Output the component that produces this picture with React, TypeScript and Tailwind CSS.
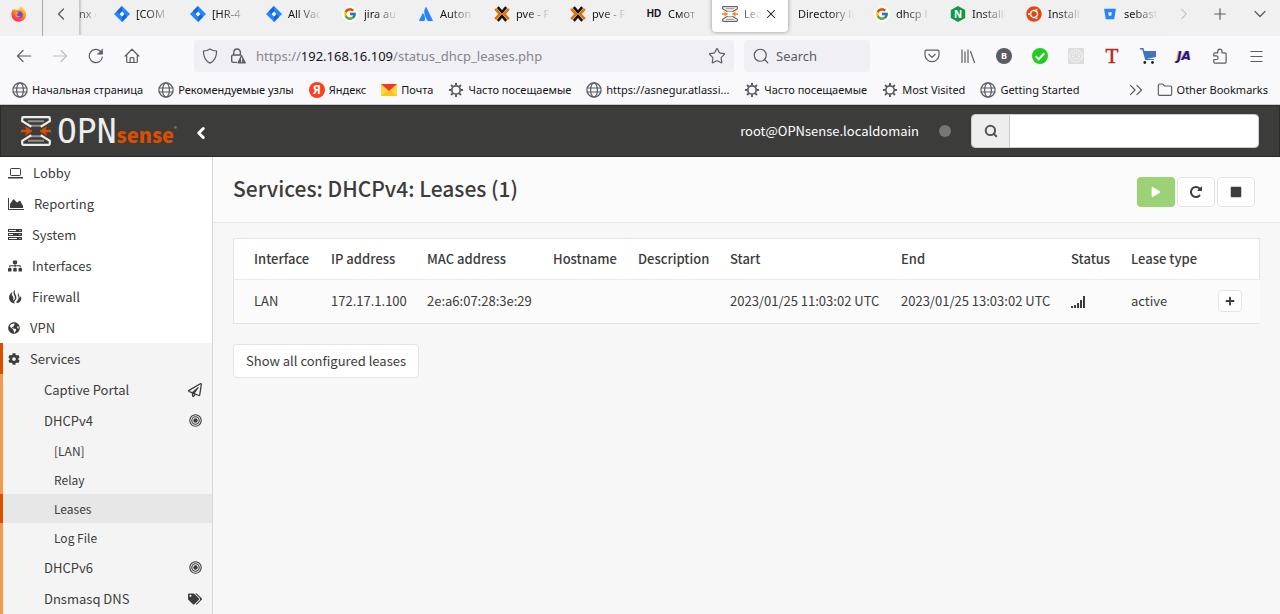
import React from 'react';
import { FcGoogle } from 'react-icons/fc';
import { FaAtlassian, FaBitbucket, FaCog, FaGlobeAmericas, FaPlay, FaPlus, FaRegPaperPlane, FaSitemap, FaStop, FaTags, FaUbuntu } from 'react-icons/fa';
import { ChevronDown, ChevronLeft, ChevronRight, ChevronsRight, Folder, Menu, Plus, Search, Star, X } from 'lucide-react';

/* ---------- browser icons ---------- */

const stroke = { fill: 'none', stroke: 'currentColor', strokeWidth: 1.2, strokeLinecap: 'round', strokeLinejoin: 'round' } as const;

function Line({ children, className = 'h-4 w-4 shrink-0' }: { children: React.ReactNode; className?: string }) {
  return (
    <svg viewBox="0 0 16 16" className={className} {...stroke} aria-hidden="true">
      {children}
    </svg>
  );
}

const BackIcon = () => <Line><path d="M14.5 8H1.5M7 2.5 1.5 8 7 13.5" /></Line>;
const ForwardIcon = () => <Line><path d="M1.5 8h13M9 2.5 14.5 8 9 13.5" /></Line>;
const ReloadIcon = () => (
  <Line>
    <path d="M14.4 9a6.6 6.6 0 1 1-1.6-5.4" />
    <path d="M14.6 1.2v5h-5z" fill="currentColor" strokeWidth="0.6" />
  </Line>
);
const HomeIcon = () => (
  <Line>
    <path d="M1 8.2 8 1.3l7 6.9M2.7 7v6.4c0 .7.4 1.1 1.1 1.1h8.4c.7 0 1.1-.4 1.1-1.1V7" />
    <path d="M6.1 14.3v-3.7c0-.6.4-1 1-1h1.8c.6 0 1 .4 1 1v3.7" />
  </Line>
);
const ShieldIcon = () => <Line><path d="M8 .9C6 2.3 3.8 2.9 1.4 3c0 5 1.2 9.6 6.6 12.1C13.4 12.6 14.6 8 14.6 3 12.2 2.9 10 2.3 8 .9z" /></Line>;
const LockWarnIcon = () => (
  <Line>
    <path d="M6.5 14.4H3c-.8 0-1.3-.5-1.3-1.3V8.3C1.7 7.5 2.2 7 3 7h6.5M3.8 7V4.3a3.3 3.3 0 0 1 6.6 0V7" strokeWidth="1.4" />
    <path d="M11.5 7.5 8 14.9h7.3z" fill="currentColor" />
    <path d="M11.6 10v2.3M11.6 13.6v.1" stroke="#f0f0f4" />
  </Line>
);
const PocketIcon = () => (
  <Line>
    <path d="M2.2 2.2h11.6c.7 0 1.2.5 1.2 1.2v3.3a7 7 0 0 1-14 0V3.4c0-.7.5-1.2 1.2-1.2z" />
    <path d="m4.8 6.3 3.2 3.1 3.2-3.1" />
  </Line>
);
const LibraryIcon = () => <Line><path d="M2 1.8v12.7M5 3.8v10.7M8 1.8v12.7M10.5 3.5l4 11" /></Line>;
const PuzzleIcon = () => (
  <Line>
    <path d="M3 15.2h9.8c.8 0 1.3-.5 1.3-1.3V6c0-.7-.4-1.2-1.2-1.2H10V3.2a2.1 2.1 0 0 0-4.2 0v1.6H3c-.7 0-1.2.5-1.2 1.2v1.9h2.5a1.8 1.8 0 0 1 0 3.6H1.8V14c0 .7.5 1.2 1.2 1.2z" />
  </Line>
);
const GlobeLine = () => (
  <svg viewBox="0 0 16 16" className="h-4 w-4 shrink-0 text-[#5b5b66]" {...stroke} aria-hidden="true">
    <circle cx="8" cy="8" r="7.1" />
    <ellipse cx="8" cy="8" rx="3.4" ry="7.1" />
    <path d="M1.1 6h13.8M1.1 10h13.8" />
  </svg>
);
const GearLine = () => (
  <svg viewBox="0 0 16 16" className="h-4 w-4 shrink-0 text-[#5b5b66]" fill="none" stroke="currentColor" aria-hidden="true">
    <circle cx="8" cy="8" r="4.2" strokeWidth="1.7" />
    <path d="M8 1v2.5M8 12.5V15M1 8h2.5M12.5 8H15M3.050 3.050l1.800 1.800M11.150 11.150l1.800 1.800M3.050 12.950l1.800-1.800M11.150 4.850l1.800-1.800" strokeWidth="2" />
  </svg>
);
const YandexIcon = () => (
  <span className="flex h-4 w-4 shrink-0 items-center justify-center rounded-full bg-[#fc3f1d] text-[12px] leading-4 font-bold text-white">Я</span>
);
const MailIcon = () => (
  <svg viewBox="0 0 16 16" className="h-4 w-4 shrink-0" aria-hidden="true">
    <path d="M0 2h16v12H0z" fill="#ffd43c" />
    <path d="M0 14 8 8l8 6z" fill="#ffc21c" />
    <path d="M0 2h16L8 9z" fill="#f8352b" />
  </svg>
);
const FirefoxIcon = () => (
  <svg viewBox="0 0 16 16" className="h-4 w-4" aria-hidden="true">
    <defs>
      <linearGradient id="ff" x1="0.8" y1="0" x2="0.2" y2="1">
        <stop offset="0" stopColor="#ffe83c" />
        <stop offset="0.45" stopColor="#ff8a1c" />
        <stop offset="1" stopColor="#f5156c" />
      </linearGradient>
    </defs>
    <path d="M10 .3c.8 1.5 3 2.5 4.2 4.7 2.7 5-1 10.700-6.200 10.700C3.600 15.700.3 12.400.4 8c0-2 .8-3.700 1.800-4.900l.5 1.200 1.100-1.500.7 1.400C5.600 3.700 8 4 8.500 3.500 8.500 2.300 9 1 10 .3z" fill="url(#ff)" />
    <circle cx="8.200" cy="8.700" r="3.500" fill="#7542e5" />
    <path d="M3.800 6.500c1.500-1 3.300-.6 4.600.3-1.200.2-1.300 1-2.400 1.300-.4 1.600 1.600 2.800 3.600 1.700-.8 3-6.800 2.200-5.800-3.300z" fill="#ff9a20" />
  </svg>
);
const JiraIcon = () => (
  <svg viewBox="0 0 16 16" className="h-4 w-4" aria-hidden="true">
    <path d="M8 0 16 8 8 16 0 8z" fill="#2684ff" />
    <path d="M8 0v5.500L5.500 8 3 5z" fill="#1465e0" />
    <path d="M8 16v-5.500L10.500 8 13 11z" fill="#1465e0" />
    <path d="M8 5.600 10.400 8 8 10.400 5.600 8z" fill="#fff" />
  </svg>
);
const ProxmoxIcon = () => (
  <svg viewBox="0 0 16 16" className="h-4 w-4" fill="none" aria-hidden="true">
    <path d="M3.800 1.200 8 6l4.200-4.800M3.800 14.800 8 10l4.200 4.800" stroke="#111" strokeWidth="2.600" />
    <path d="M1.200 2.800 6 8l-4.800 5.200M14.800 2.800 10 8l4.800 5.200" stroke="#e57000" strokeWidth="2.600" />
  </svg>
);
const NginxIcon = () => (
  <svg viewBox="0 0 16 16" className="h-4 w-4" aria-hidden="true">
    <path d="M8 0l7.200 4v8L8 16 .8 12V4z" fill="#149848" />
    <text x="8" y="11.500" textAnchor="middle" fontSize="10" fontWeight="700" fontFamily="Open Sans, sans-serif" fill="#fff">N</text>
  </svg>
);
const GoogleTab = () => (
  <span className="flex h-4 w-4 items-center justify-center rounded-full bg-white"><FcGoogle className="h-3.5 w-3.5" /></span>
);

/* The hourglass frame with two inward arrows used by the product mark. */
function SenseMark({ className, frame, arrow }: { className: string; frame: string; arrow: string }) {
  return (
    <svg viewBox="0 0 30 30" className={className} fill="none" aria-hidden="true">
      <path d="M7 5.200H23M9.500 9.800H20.500M9.500 20.200H20.500M7 24.800H23" stroke="#8f8f8d" strokeWidth="2" />
      <path d="M10.300 10.800 1.200 5.200V2.200Q1.200 1.200 2.200 1.200H27.800Q28.800 1.200 28.800 2.200V5.200L19.700 10.800M10.300 19.200 1.200 24.800V27.800Q1.200 28.800 2.200 28.800H27.800Q28.800 28.800 28.800 27.800V24.800L19.700 19.200" stroke={frame} strokeWidth="2.200" />
      <path d="M0 15H9M30 15H21" stroke={arrow} strokeWidth="2.400" />
      <path d="M4.500 10.800 11 15 4.500 19.200 6.500 15zM25.500 10.800 19 15 25.500 19.200 23.500 15z" fill={arrow} stroke={arrow} strokeWidth="0.800" />
    </svg>
  );
}

/* ---------- browser chrome ---------- */

type TabData = { label: string; icon?: React.ReactNode; active?: boolean };

const tabs: TabData[] = [
  { label: '[COM', icon: <JiraIcon /> },
  { label: '[HR-4', icon: <JiraIcon /> },
  { label: 'All Vac', icon: <JiraIcon /> },
  { label: 'jira au', icon: <GoogleTab /> },
  { label: 'Auton', icon: <FaAtlassian className="h-3.5 w-3.5 text-[#2684ff]" /> },
  { label: 'pve - F', icon: <ProxmoxIcon /> },
  { label: 'pve - F', icon: <ProxmoxIcon /> },
  { label: 'Смот', icon: <span className="font-['Liberation_Sans',sans-serif] text-[10px] font-bold">HD</span> },
  { label: 'Lea', icon: <SenseMark className="h-4 w-4" frame="#666" arrow="#f58220" />, active: true },
  { label: 'Directory li' },
  { label: 'dhcp l', icon: <GoogleTab /> },
  { label: 'Installi', icon: <NginxIcon /> },
  { label: 'Install', icon: <span className="rounded-full bg-white"><FaUbuntu className="h-4 w-4 text-[#dd4814]" /></span> },
  { label: 'sebast', icon: <FaBitbucket className="h-3 w-3 text-[#2684ff]" /> },
];

function Tab({ label, icon, active }: TabData) {
  return (
    <div
      className={`flex h-9 w-[76px] shrink-0 items-center gap-1.5 px-2.5 ${
        active ? 'rounded-b bg-white shadow-[0_0_4px_rgba(0,0,0,0.4)]' : ''
      }`}
    >
      {icon && <span className="flex h-4 w-4 shrink-0 items-center justify-center">{icon}</span>}
      <a
        href="#tab"
        className="min-w-0 flex-1 overflow-hidden whitespace-nowrap [mask-image:linear-gradient(to_left,transparent,black_24px)]"
      >
        {label}
      </a>
      {active && (
        <button type="button" aria-label="Close tab" className="-ml-1 shrink-0">
          <X className="h-3.5 w-3.5" strokeWidth={1.8} />
        </button>
      )}
    </div>
  );
}

function TabStrip() {
  return (
    <div className="flex h-9 items-start bg-[#f0f0f0] text-[#15141a]">
      <button type="button" aria-label="Firefox" className="flex h-9 w-[43px] items-center justify-center border-r border-[#a8a8a8] pr-1 pb-2">
        <FirefoxIcon />
      </button>
      <button type="button" aria-label="Scroll tabs left" className="-mt-1 flex h-9 w-9 items-center justify-center">
        <ChevronLeft className="h-5 w-5 text-[#5b5b66]" strokeWidth={1.5} />
      </button>
      <div className="-mt-1 flex h-[39px] min-w-0 flex-1 items-start overflow-hidden shadow-[inset_3px_0_2px_-1px_#c8c8c8]">
        <a href="#tab" className="flex h-9 w-[25px] shrink-0 items-center overflow-hidden text-[#555] [mask-image:linear-gradient(to_right,black_6px,transparent_18px)]">nx c</a>
        {tabs.map((t, i) => (
          <Tab key={i} {...t} />
        ))}
      </div>
      <div className="-mt-1 flex h-9 items-center pr-0.5 text-[#5b5b66]">
        <button type="button" aria-label="Scroll tabs right" className="flex w-9 justify-center text-[#c4c4c8]">
          <ChevronRight className="h-[18px] w-[18px]" strokeWidth={1.5} />
        </button>
        <button type="button" aria-label="New tab" className="flex w-9 justify-center">
          <Plus className="h-[18px] w-[18px]" strokeWidth={1.6} />
        </button>
        <button type="button" aria-label="List all tabs" className="flex w-10 justify-center pl-1">
          <ChevronDown className="h-5 w-5" strokeWidth={1.5} />
        </button>
      </div>
    </div>
  );
}

function ToolButton({ label, children, dim }: { label: string; children: React.ReactNode; dim?: boolean }) {
  return (
    <button type="button" aria-label={label} className={`flex h-8 w-9 shrink-0 items-center justify-center ${dim ? 'text-[#c0c0c6]' : 'text-[#5b5b66]'}`}>
      {children}
    </button>
  );
}

function Toolbar() {
  return (
    <div className="flex h-10 items-center bg-[#f9f9fb] px-1.5">
      <ToolButton label="Back"><BackIcon /></ToolButton>
      <ToolButton label="Forward" dim><ForwardIcon /></ToolButton>
      <ToolButton label="Reload"><ReloadIcon /></ToolButton>
      <ToolButton label="Home"><HomeIcon /></ToolButton>
      <div className="ml-11 flex h-8 min-w-0 flex-1 items-center rounded bg-[#f0f0f4] px-2 text-[#5b5b66]">
        <ShieldIcon />
        <span className="ml-3 flex"><LockWarnIcon /></span>
        <a href="#address" className="ml-2.5 min-w-0 flex-1 truncate text-[13px] leading-5 text-[#85858e]">
          https://<span className="text-[#15141a]">192.168.16.109</span>/status_dhcp_leases.php
        </a>
        <Star className="h-[18px] w-[18px]" strokeWidth={1.6} />
      </div>
      <label className="ml-2.5 flex h-8 w-[126px] items-center gap-1.5 rounded bg-[#f0f0f4] px-2 text-[#5b5b66]">
        <Search className="h-[18px] w-[18px] shrink-0" strokeWidth={1.6} />
        <input aria-label="Search the web" placeholder="Search" className="w-full min-w-0 bg-transparent text-[13px] outline-none placeholder:text-[#5b5b66]" />
      </label>
      <div className="ml-11 flex">
        <ToolButton label="Pocket"><PocketIcon /></ToolButton>
        <ToolButton label="Library"><LibraryIcon /></ToolButton>
        <ToolButton label="Account">
          <span className="flex h-4 w-4 items-center justify-center rounded-full bg-[#5b5b66] text-[9px] font-bold text-white">B</span>
        </ToolButton>
        <ToolButton label="Site check">
          <svg viewBox="0 0 16 16" className="h-4 w-4" aria-hidden="true">
            <circle cx="8" cy="8" r="8" fill="#23cc23" />
            <path d="m3.800 8.300 2.900 2.900 5.600-6" fill="none" stroke="#fff" strokeWidth="2" />
          </svg>
        </ToolButton>
        <ToolButton label="Extension">
          <svg viewBox="0 0 16 16" className="h-4 w-4" aria-hidden="true">
            <path d="M0 0h16v16H0z" fill="#dedede" />
            <circle cx="8" cy="8" r="6" fill="none" stroke="#f4f4f4" strokeWidth="1.500" strokeDasharray="1.500 1" />
            <circle cx="8" cy="8" r="3" fill="none" stroke="#f4f4f4" strokeWidth="2" strokeDasharray="1 1" />
          </svg>
        </ToolButton>
        <ToolButton label="Text tool">
          <span className="font-['Liberation_Serif',serif] text-[21px] leading-4 text-[#b5281c] [-webkit-text-stroke:0.5px_#b5281c]">T</span>
        </ToolButton>
        <ToolButton label="Cart">
          <svg viewBox="0 0 16 16" className="h-4 w-4" aria-hidden="true">
            <path d="M0 0h3.400l1 3H16v6L6.500 11H14v1H5.200L2.300 1.600H0z" fill="#4173c4" />
            <circle cx="4.800" cy="14.500" r="1.400" fill="#222" />
            <circle cx="12.500" cy="14.500" r="1.400" fill="#222" />
          </svg>
        </ToolButton>
        <ToolButton label="JA">
          <span className="font-['DejaVu_Sans',sans-serif] text-[12px] font-bold text-[#1b10b8] italic [text-shadow:1px_0_#f3c55b,-1px_0_#f3c55b]">JA</span>
        </ToolButton>
        <ToolButton label="Extensions"><PuzzleIcon /></ToolButton>
        <ToolButton label="Menu"><Menu className="h-[17px] w-[17px]" strokeWidth={1.5} /></ToolButton>
      </div>
    </div>
  );
}

const bookmarks = [
  { label: 'Начальная страница', icon: <GlobeLine /> },
  { label: 'Рекомендуемые узлы', icon: <GlobeLine /> },
  { label: 'Яндекс', icon: <YandexIcon /> },
  { label: 'Почта', icon: <MailIcon /> },
  { label: 'Часто посещаемые', icon: <GearLine /> },
  { label: 'https://asnegur.atlassi...', icon: <GlobeLine /> },
  { label: 'Часто посещаемые', icon: <GearLine /> },
  { label: 'Most Visited', icon: <GearLine /> },
  { label: 'Getting Started', icon: <GlobeLine /> },
];

function Bookmarks() {
  return (
    <div className="flex h-[29px] items-center border-b border-[#ccc] bg-[#f9f9fb] px-3 text-[#15141a]">
      <div className="flex min-w-0 flex-1 items-center gap-[15px] overflow-hidden">
        {bookmarks.map((b, i) => (
          <a key={i} href="#bookmark" className="flex shrink-0 items-center gap-1 whitespace-nowrap">
            {b.icon}
            {b.label}
          </a>
        ))}
      </div>
      <button type="button" aria-label="More bookmarks" className="mr-2.5">
        <ChevronsRight className="h-[22px] w-[22px] text-[#5b5b66]" strokeWidth={1.3} />
      </button>
      <a href="#bookmark" className="flex shrink-0 items-center gap-1 whitespace-nowrap">
        <Folder className="h-4 w-4 text-[#5b5b66]" strokeWidth={1.7} />
        Other Bookmarks
      </a>
    </div>
  );
}

/* ---------- product icons ---------- */

const LaptopIcon = () => (
  <svg viewBox="0 0 15 14" className="h-3.5 w-[15px]" fill="none" aria-hidden="true">
    <rect x="2.500" y="2.500" width="10" height="7" rx="0.800" stroke="currentColor" />
    <path d="M0 11h15v1.200q0 .3-.6.300H.6Q0 12.500 0 12.200z" fill="currentColor" />
  </svg>
);
const AreaIcon = () => (
  <svg viewBox="0 0 16 14" className="h-3.5 w-4" aria-hidden="true">
    <path d="M0 1h1v11h15v1H0z" fill="currentColor" />
    <path d="M2 11V7l3.500-5L9 5.500l3-2L15 9v2z" fill="currentColor" />
  </svg>
);
const ServerIcon = () => (
  <svg viewBox="0 0 14 14" className="h-3.5 w-3.5" aria-hidden="true">
    <path d="M0 1h14v3H0zM0 5h14v3H0zM0 9h14v3H0z" fill="currentColor" />
    <path d="M1 2.500h7M1 6.500h4M1 10.500h8M11.500 2.500h1M11.500 6.500h1M11.500 10.500h1" stroke="#fff" />
  </svg>
);
const FlameIcon = () => (
  <svg viewBox="0 0 14 14" className="h-3.5 w-3.5" fill="currentColor" aria-hidden="true">
    <path d="M7 0C4.500 1.500 5.500 4 6.500 6 7.500 8 7 10 5 10.500 5.800 9 5.500 7.500 4.700 6.300 3.500 5 3.500 3.500 4.500 2 1 4 .2 8 2 10.800 3 12.500 5 13.500 7.300 13.500 6 12.800 5.800 11.800 6.800 10.800 8.600 9 8.800 7.500 7.800 5.300 7 3.500 6.300 1.800 7 0z" />
    <path d="M10.500 2.500C9.500 3.800 9.600 5 10.200 6.300 11 8.200 10.500 9.700 9 11 8.300 11.800 8.300 12.800 9 13.300 12 12.500 13.500 10.500 13.300 8.300 13.200 7.300 12.900 6.700 12.300 6 12.400 7 12 7.600 11.600 8 11.900 6 10 4.500 10.500 2.500z" />
  </svg>
);
const TargetIcon = () => (
  <svg viewBox="0 0 13 13" className="h-[13px] w-[13px]" fill="none" stroke="currentColor" aria-hidden="true">
    <circle cx="6.500" cy="6.500" r="5.700" strokeWidth="1.100" />
    <circle cx="6.500" cy="6.500" r="3.700" strokeWidth="1.100" />
    <circle cx="6.500" cy="6.500" r="2.200" fill="currentColor" stroke="none" />
  </svg>
);
const SignalIcon = () => (
  <svg viewBox="0 0 14 13" className="h-[13px] w-3.5" fill="currentColor" role="img" aria-label="online">
    <path d="M0 11h2v2H0zM3 10h2v3H3zM6 8h2v5H6zM9 5h2v8H9zM12 1h2v12h-2z" />
  </svg>
);
const RepeatIcon = () => (
  <svg viewBox="0 0 1792 1792" className="h-3.5 w-3.5" fill="currentColor" aria-hidden="true">
    <path d="M1664 256v448q0 26-19 45t-45 19h-448q-42 0-59-40-17-39 14-69l138-138q-148-137-349-137-104 0-198.500 40.500t-163.500 109.500-109.500 163.500-40.500 198.500 40.500 198.500 109.500 163.500 163.500 109.500 198.500 40.500q119 0 225-52t179-147q7-10 23-12 15 0 25 9l137 138q9 8 9.500 20.500t-7.500 22.500q-109 132-264 204.500t-327 72.500q-156 0-298-61t-245-164-164-245-61-298 61-298 164-245 245-164 298-61q147 0 284.500 55.500t244.500 156.500l130-129q29-31 70-14 39 17 39 59z" />
  </svg>
);

/* ---------- product page ---------- */

function AppHeader() {
  return (
    <header className="flex h-[52px] shrink-0 items-center border border-[#2b2b2a] bg-[#3c3c3b] px-5">
      <a href="#home" aria-label="OPNsense" className="flex w-[151px] shrink-0 items-center">
        <SenseMark className="h-[30px] w-[30px] shrink-0" frame="#eeeeed" arrow="#d94f00" />
        <span className="ml-1.5 pt-0.5 font-['DejaVu_Sans_Mono',monospace] text-[33px] leading-8 text-[#eeeeed]">OPN</span>
        <span className="pt-2 font-['Noto_Sans_CJK_SC',sans-serif] text-[20px] leading-6 font-black text-[#d94f00]">sense</span>
        <span className="pb-1 text-[6px] leading-3 text-[#a0a09e]">®</span>
      </a>
      <button type="button" aria-label="Toggle sidebar" className="ml-5 pt-1 text-white">
        <ChevronLeft className="h-[18px] w-[18px]" strokeWidth={4} />
      </button>
      <div className="flex-1" />
      <span className="text-[13px] leading-5 text-white">root@OPNsense.localdomain</span>
      <span className="ml-5 h-3 w-3 rounded-full bg-[#777]" />
      <form className="ml-5 flex h-[34px] w-72 overflow-hidden rounded-sm border border-[#ccc]" onSubmit={(e) => e.preventDefault()}>
        <label htmlFor="quick" className="flex w-[38px] shrink-0 items-center justify-center border-r border-[#ccc] bg-[#eee] text-[#555]">
          <Search className="h-3.5 w-3.5" strokeWidth={3.5} />
        </label>
        <input id="quick" aria-label="Quick search" className="min-w-0 flex-1 bg-white px-3 text-[13px] outline-none" />
      </form>
    </header>
  );
}

const sections = [
  { label: 'Lobby', icon: <LaptopIcon /> },
  { label: 'Reporting', icon: <AreaIcon /> },
  { label: 'System', icon: <ServerIcon /> },
  { label: 'Interfaces', icon: <FaSitemap className="h-3.5 w-3.5" /> },
  { label: 'Firewall', icon: <FlameIcon /> },
  { label: 'VPN', icon: <FaGlobeAmericas className="h-3 w-3" /> },
];

function SubItem({ label, icon }: { label: string; icon: React.ReactNode }) {
  return (
    <a href="#menu" className="flex h-[31px] items-center justify-between border-l-3 border-[#f09a4f] pr-2.5 pl-[41px]">
      {label}
      {icon}
    </a>
  );
}

function Sidebar() {
  return (
    <nav className="w-[213px] shrink-0 overflow-hidden border-r border-[#d8d8d8] bg-white text-[13px] leading-5 text-[#3c3c3b]">
      {sections.map((s) => (
        <a key={s.label} href="#menu" className="flex h-[31px] items-center gap-2.5 pl-2">
          {s.icon}
          {s.label}
        </a>
      ))}
      <div className="bg-[#f4f4f4]">
        <a href="#menu" className="flex h-[31px] items-center gap-2.5 border-l-3 border-[#d94f00] pl-[5px]">
          <FaCog className="h-3 w-3" />
          Services
        </a>
        <SubItem label="Captive Portal" icon={<FaRegPaperPlane className="h-3.5 w-3.5" />} />
        <SubItem label="DHCPv4" icon={<TargetIcon />} />
        <div className="text-[12px]">
          {['[LAN]', 'Relay', 'Leases', 'Log File'].map((l) => (
            <a
              key={l}
              href="#menu"
              className={`flex h-[29px] items-center border-l-3 pl-[51px] ${
                l === 'Leases' ? 'border-[#d94f00] bg-[#e7e7e7]' : 'border-[#f09a4f]'
              }`}
            >
              {l}
            </a>
          ))}
        </div>
        <SubItem label="DHCPv6" icon={<TargetIcon />} />
        <SubItem label="Dnsmasq DNS" icon={<FaTags className="h-3.5 w-3.5" />} />
      </div>
    </nav>
  );
}

const columns = [
  { label: 'Interface', width: 'w-[89px]' },
  { label: 'IP address', width: 'w-[96px]' },
  { label: 'MAC address', width: 'w-[126px]' },
  { label: 'Hostname', width: 'w-[85px]' },
  { label: 'Description', width: 'w-[92px]' },
  { label: 'Start', width: 'w-[171px]' },
  { label: 'End', width: 'w-[170px]' },
  { label: 'Status', width: 'w-[60px]' },
  { label: 'Lease type', width: 'w-[87px]' },
  { label: '', width: 'w-[50px]' },
];

const cell = 'px-2 first:pl-5 whitespace-nowrap';

function LeaseTable() {
  return (
    <div className="border border-[#e4e4e4] bg-white">
      <table className="w-full table-fixed text-left text-[13px] leading-5">
        <thead>
          <tr className="h-10">
            {columns.map((c) => (
              <th key={c.label} scope="col" className={`${cell} ${c.width} font-medium`}>
                {c.label}
              </th>
            ))}
          </tr>
        </thead>
        <tbody>
          <tr className="h-11 border-t border-[#e9e9e9] bg-[#fbfbfb]">
            <td className={cell}>LAN</td>
            <td className={cell}>172.17.1.100</td>
            <td className={cell}>2e:a6:07:28:3e:29</td>
            <td className={cell} />
            <td className={cell} />
            <td className={cell}>2023/01/25 11:03:02 UTC</td>
            <td className={cell}>2023/01/25 13:03:02 UTC</td>
            <td className={cell}><SignalIcon /></td>
            <td className={cell}>active</td>
            <td className={cell}>
              <button type="button" aria-label="Add static mapping" className="flex h-[22px] w-6 items-center justify-center rounded-sm border border-[#e4e4e4] bg-white">
                <FaPlus className="h-2.5 w-2.5" />
              </button>
            </td>
          </tr>
        </tbody>
      </table>
    </div>
  );
}

function PageTitle() {
  const plain = 'flex h-[30px] w-[38px] items-center justify-center rounded-sm border border-[#e4e4e4] bg-white';
  return (
    <div className="flex h-[66px] items-center justify-between border-b border-[#e7e7e7] bg-[#fbfbfb] pr-[25px] pl-5">
      <h1 className="pb-1 text-[21px] leading-6 font-medium">Services: DHCPv4: Leases (1)</h1>
      <div className="flex gap-0.5 pt-1">
        <button type="button" aria-label="Start service" className="flex h-[30px] w-[38px] items-center justify-center rounded-sm bg-[#9bd275] text-white">
          <FaPlay className="h-2.5 w-2.5" />
        </button>
        <button type="button" aria-label="Restart service" className={plain}><RepeatIcon /></button>
        <button type="button" aria-label="Stop service" className={plain}><FaStop className="h-3 w-3" /></button>
      </div>
    </div>
  );
}

export default function App() {
  return (
    <div className="flex h-screen flex-col overflow-hidden font-['Noto_Sans',sans-serif] text-[11px] leading-4">
      <TabStrip />
      <Toolbar />
      <Bookmarks />
      <div className="flex min-h-0 flex-1 flex-col font-['Noto_Sans_CJK_SC',sans-serif] text-[#3c3c3b]">
        <AppHeader />
        <div className="flex min-h-0 flex-1">
          <Sidebar />
          <main className="min-w-0 flex-1 bg-[#f7f7f7]">
            <PageTitle />
            <div className="px-5 py-[15px]">
              <LeaseTable />
              <button type="button" className="mt-5 h-[34px] rounded-sm border border-[#e4e4e4] bg-white px-3 text-[13px] leading-5">
                Show all configured leases
              </button>
            </div>
          </main>
        </div>
      </div>
    </div>
  );
}
